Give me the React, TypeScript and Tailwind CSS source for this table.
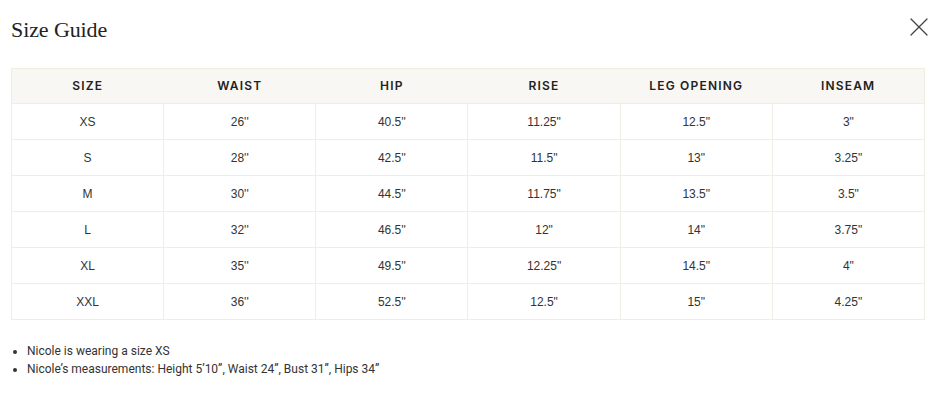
import React from 'react';

const XIcon = () => <svg xmlns="http://www.w3.org/2000/svg" width="18" height="18" viewBox="0 0 18 18" fill="none" stroke="#444" strokeWidth="1.2" strokeLinecap="round"><path d="M1 1l16 16"/><path d="M17 1L1 17"/></svg>;

const headers = ['SIZE', 'WAIST', 'HIP', 'RISE', 'LEG OPENING', 'INSEAM'];

const rows = [
    ['XS', "26''", "40.5''", '11.25"', '12.5"', '3"'],
    ['S', "28''", "42.5''", '11.5"', '13"', '3.25"'],
    ['M', "30''", "44.5''", '11.75"', '13.5"', '3.5"'],
    ['L', "32''", "46.5''", '12"', '14"', '3.75"'],
    ['XL', "35''", "49.5''", '12.25"', '14.5"', '4"'],
    ['XXL', "36''", "52.5''", '12.5"', '15"', '4.25"'],
];

export default function App() {
    return (
        <div className="w-[937px] h-[420px] bg-white px-[11px] pt-[14px]">
            {/* Title */}
            <div className="flex items-start justify-between h-[54px]">
                <h2 className="text-[22px] leading-[32px] text-[#222] tracking-[-0.1px]" style={{ fontFamily: '"Liberation Serif", "DejaVu Serif", serif' }}>Size Guide</h2>
                <button className="mt-[4px] mr-[-2px]" aria-label="Close"><XIcon /></button>
            </div>

            {/* Table */}
            <table className="w-[914px] table-fixed border-collapse border border-[#f0ede2] text-center">
                <thead>
                    <tr className="bg-[#f9f7f3] h-[35px]">
                        {headers.map(h => (
                            <th key={h} className="text-[12px] font-semibold tracking-[0.1em] text-[#222]" style={{ fontFamily: 'Inter, "Liberation Sans", sans-serif' }}>{h}</th>
                        ))}
                    </tr>
                </thead>
                <tbody>
                    {rows.map(r => (
                        <tr key={r[0]} className="h-[36px] border-t border-[#f0ede2]">
                            {r.map((c, i) => (
                                <td key={i} className="border-l border-[#f0ede2] text-[12px] text-[#333]" style={{ fontFamily: '"Liberation Sans", Arial, sans-serif' }}>{c}</td>
                            ))}
                        </tr>
                    ))}
                </tbody>
            </table>

            {/* Notes */}
            <ul className="mt-[22px] list-disc pl-[16px] text-[12px] leading-[18px] text-[#333]" style={{ fontFamily: 'Roboto, "Liberation Sans", sans-serif' }}>
                <li>Nicole is wearing a size XS</li>
                <li>Nicole’s measurements: Height 5’10”, Waist 24”, Bust 31”, Hips 34”</li>
            </ul>
        </div>
    );
}
